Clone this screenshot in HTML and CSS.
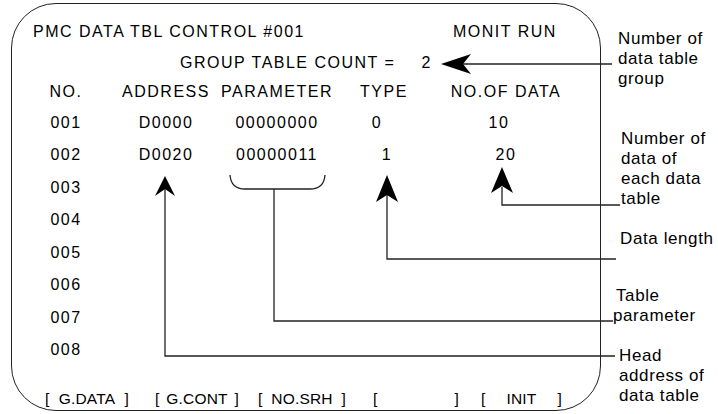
FILE: index.html
```html
<!DOCTYPE html>
<html lang="en">
<head>
    <meta charset="UTF-8">
    <meta name="viewport" content="width=device-width, initial-scale=1.0">
    <title>PMC Data Table Control</title>
    <link rel="stylesheet" href="styles.css">
</head>
<body>
    <div class="figure">
        <div class="screen">
            <div class="title-row">
                <span>PMC DATA TBL CONTROL #001</span>
                <span>MONIT RUN</span>
            </div>
            <div class="count-row">GROUP TABLE COUNT =<span class="count">2</span></div>
            <div class="row head">
                <span>NO.</span><span>ADDRESS</span><span>PARAMETER</span><span>TYPE</span><span>NO.OF DATA</span>
            </div>
            <div class="row">
                <span>001</span><span>D0000</span><span>00000000</span><span class="type">0</span><span class="size">10</span>
            </div>
            <div class="row">
                <span>002</span><span>D0020</span><span>00000011</span><span class="type one">1</span><span class="size two">20</span>
            </div>
            <div class="row"><span>003</span></div>
            <div class="row"><span>004</span></div>
            <div class="row"><span>005</span></div>
            <div class="row"><span>006</span></div>
            <div class="row"><span>007</span></div>
            <div class="row"><span>008</span></div>
            <div class="keys">
                <div class="key k1"><span>[</span><span>G.DATA</span><span>]</span></div>
                <div class="key k2"><span>[</span><span>G.CONT</span><span>]</span></div>
                <div class="key k3"><span>[</span><span>NO.SRH</span><span>]</span></div>
                <div class="key k4"><span>[</span><span></span><span>]</span></div>
                <div class="key k5"><span>[</span><span>INIT</span><span>]</span></div>
            </div>
        </div>

        <!-- leader lines and arrows -->
        <svg class="leaders" width="718" height="414" viewBox="0 0 718 414">
            <g fill="none" stroke="#222" stroke-width="1.3">
                <path d="M463 64H612"/>
                <path d="M502 187V205H620"/>
                <path d="M387 195V259H616"/>
                <path d="M230 175Q231 189 245 189H310Q324 189 325 175"/>
                <path d="M274 189V321H613"/>
                <path d="M165 189V356H615"/>
            </g>
            <g fill="#000">
                <path d="M441 64L471 54L463 64L471 74Z"/>
                <path d="M502 167L491 193L502 186L513 193Z"/>
                <path d="M387 175L376 202L387 195L398 202Z"/>
                <path d="M165 176L155 196L165 189L175 196Z"/>
            </g>
        </svg>

        <div class="note n-group">Number of<br>data table<br>group</div>
        <div class="note n-count">Number of<br>data of<br>each data<br>table</div>
        <div class="note n-length">Data length</div>
        <div class="note n-param">Table<br>parameter</div>
        <div class="note n-head">Head<br>address of<br>data table</div>
    </div>
</body>
</html>
```

FILE: styles.css
```css
body {
    margin: 0;
    background-color: #fff;
    color: #000;
    font-family: 'Liberation Sans', Arial, sans-serif;
}
.figure {
    position: relative;
    width: 718px;
    height: 414px;
    overflow: hidden;
}
.screen {
    box-sizing: border-box;
    width: 590px;
    height: 408px;
    margin: 3px 0 0 11px;
    padding-top: 12px;
    border: 1px solid #222;
    border-radius: 45px;
    font-size: 16px;
    letter-spacing: 1.5px;
}
.title-row {
    display: grid;
    grid-template-columns: 420px auto;
    padding-left: 21px;
    line-height: 31px;
}
.count-row {
    padding-left: 168px;
    line-height: 31px;
}
.count {
    padding-left: 26px;
}
.row {
    display: grid;
    grid-template-columns: 108px 92px 130px 84px 160px;
    line-height: 32.5px;
    text-align: center;
}
.row.head {
    line-height: 28.5px;
}
.type {
    padding-right: 14px;
}
.type.one {
    padding-right: 0;
    padding-left: 6px;
}
.size {
    padding-right: 14px;
}
.size.two {
    padding-right: 0;
}
.keys {
    display: grid;
    grid-template-columns: 110px 103px 115px 108px auto;
    margin-top: 22px;
    padding-left: 33px;
    font-size: 15.5px;
    letter-spacing: 0.2px;
    line-height: 20px;
}
.key {
    display: flex;
    justify-content: space-between;
}
.k1 { width: 84px; }
.k2 { width: 84px; }
.k3 { width: 88px; }
.k4 { width: 86px; }
.k5 { width: 81px; }
.leaders {
    position: absolute;
    left: 0;
    top: 0;
    pointer-events: none;
}
.note {
    position: absolute;
    font-size: 17px;
    letter-spacing: 0.6px;
    line-height: 20px;
    white-space: nowrap;
}
.n-group { left: 618px; top: 29px; }
.n-count { left: 621px; top: 129px; }
.n-length { left: 620px; top: 229px; }
.n-param { left: 613px; top: 286px; text-indent: 3px; }
.n-head { left: 619px; top: 346px; }
```
